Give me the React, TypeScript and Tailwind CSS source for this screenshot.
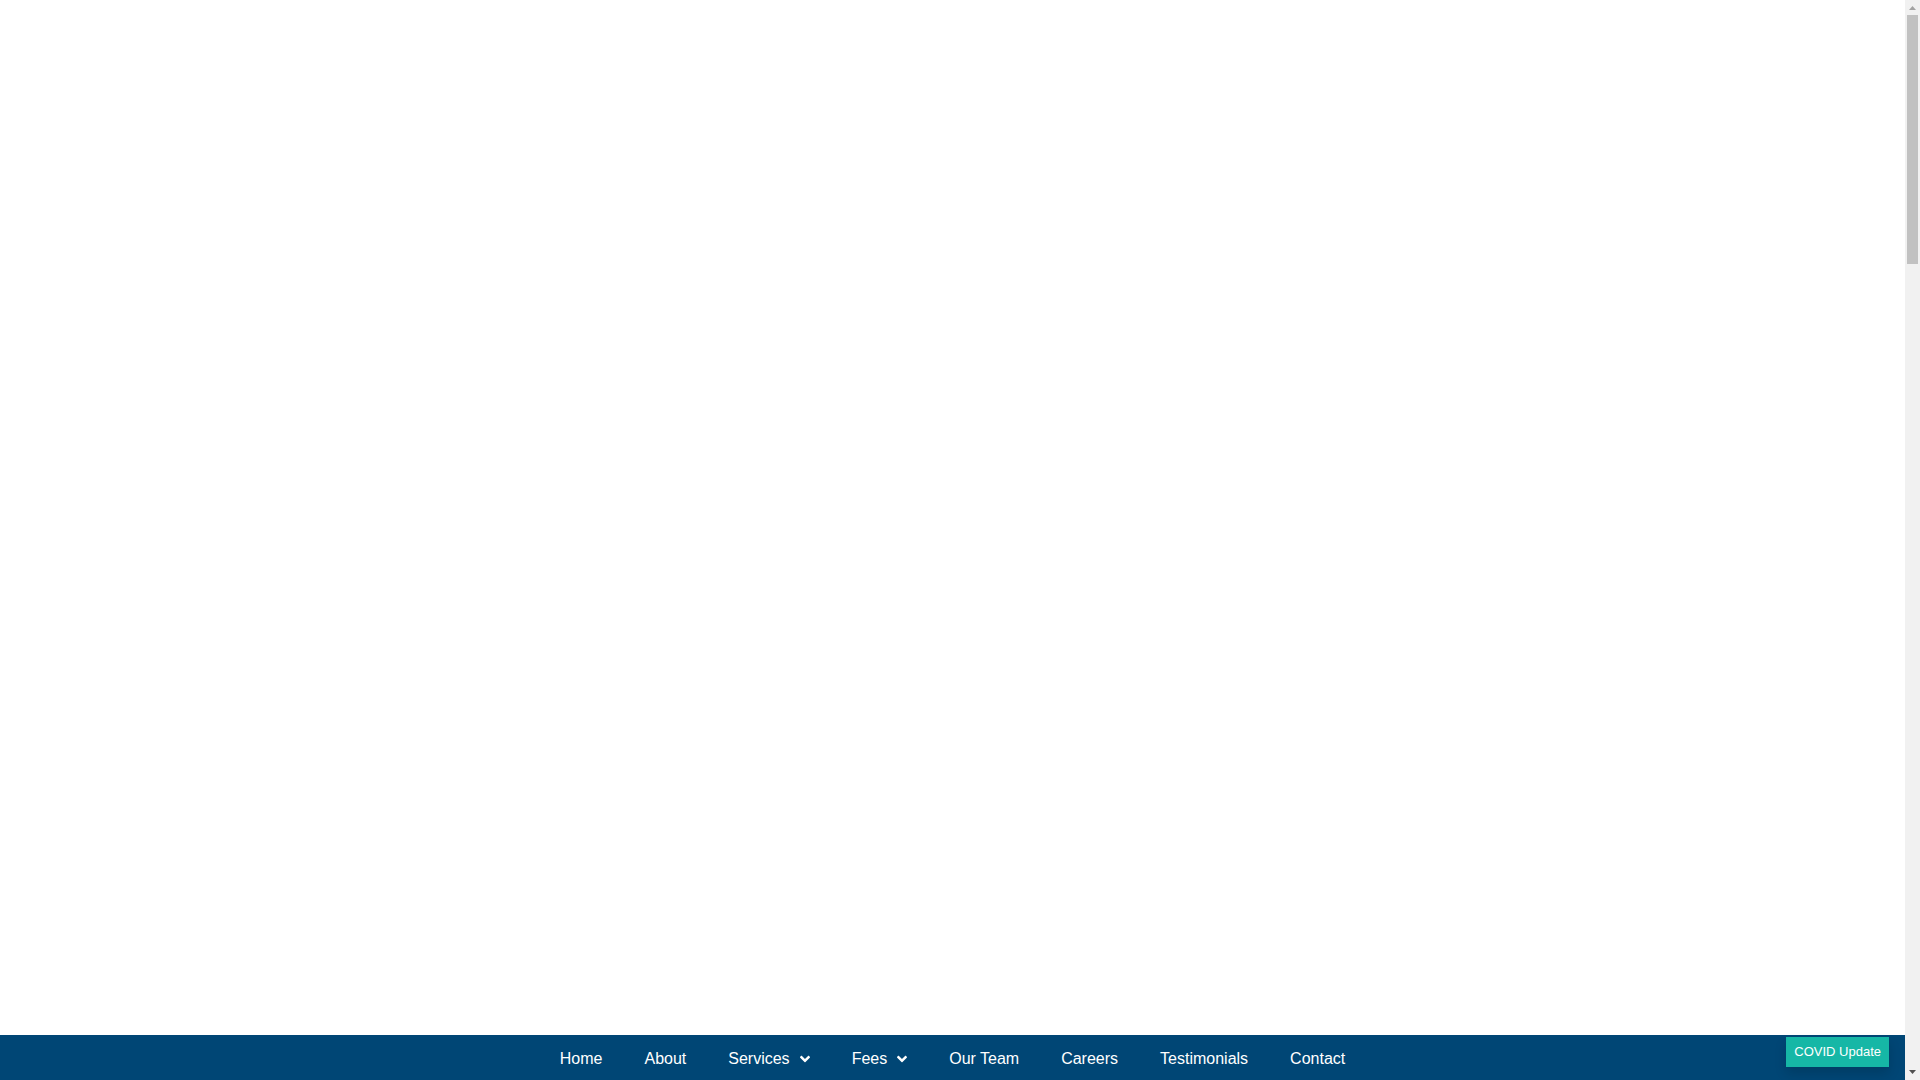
import { FaAngleDown } from "react-icons/fa";

const links = [
  { label: "Home" },
  { label: "About" },
  { label: "Services", menu: true },
  { label: "Fees", menu: true },
  { label: "Our Team" },
  { label: "Careers" },
  { label: "Testimonials" },
  { label: "Contact" },
];

function Scrollbar() {
  return (
    <div aria-hidden="true" className="flex w-[15px] shrink-0 flex-col items-center bg-[#f1f1f1]">
      <svg className="h-[15px] w-[15px] shrink-0" viewBox="0 0 15 15">
        <path d="M4 10h7L7.500 6z" fill="#a3a3a3" />
      </svg>
      <div className="h-[249px] w-[11px] bg-[#c1c1c1]" />
      <svg className="mt-auto h-[15px] w-[15px] shrink-0" viewBox="0 0 15 15">
        <path d="M4 5h7L7.500 9z" fill="#505050" />
      </svg>
    </div>
  );
}

export default function App() {
  return (
    <div className="flex h-screen overflow-hidden bg-white font-['Liberation_Sans',Arial,sans-serif]">
      <div className="relative flex min-w-0 flex-1 flex-col">
        <main className="flex-1" />
        <nav className="flex h-[45px] justify-center overflow-hidden bg-[#004675]">
          <ul className="flex h-12 items-center">
            {links.map((link) => (
              <li key={link.label}>
                <a href="#" className="flex items-center px-[21px] text-base text-white">
                  {link.label}
                  {link.menu && <FaAngleDown className="ml-[10px] h-4 w-[10px]" />}
                </a>
              </li>
            ))}
          </ul>
        </nav>
        <a
          href="#"
          className="absolute right-4 bottom-[13px] flex h-[30px] items-center bg-[#16b7a6] px-2 text-[13px] text-white shadow-[0_6px_12px_rgba(0,0,0,0.15)]"
        >
          COVID Update
        </a>
      </div>
      <Scrollbar />
    </div>
  );
}
